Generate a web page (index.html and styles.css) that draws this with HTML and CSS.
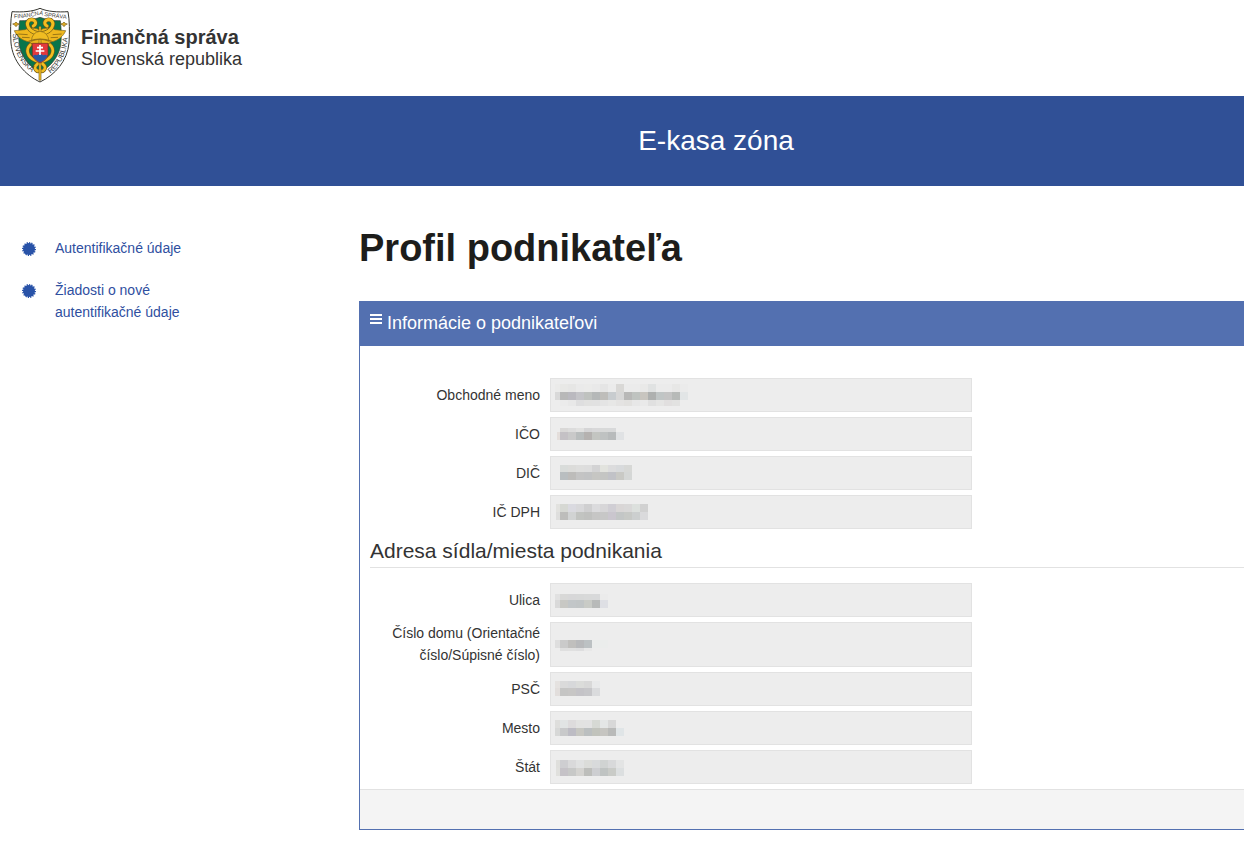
FILE: index.html
```html
<!DOCTYPE html>
<html lang="sk">
<head>
<meta charset="utf-8">
<title>E-kasa zóna</title>
<link rel="stylesheet" href="styles.css">
</head>
<body>

<header class="top">
    <a class="brand" href="#">
        <svg class="crest" viewBox="32 22 180 228" aria-hidden="true">
            <path d="M122 26C100 36 68 38 38 36C33 62 33 98 35 130C40 184 76 225 122 247C168 225 204 184 209 130C211 98 211 62 206 36C176 38 144 36 122 26Z" fill="#fff" stroke="#34342e" stroke-width="3"/>
            <path d="M122 53C102 60 79 64 61 63C58 90 57 111 60 137C66 170 87 199 122 219C157 199 178 170 184 137C187 111 186 90 183 63C165 64 142 60 122 53Z" fill="#08754b" stroke="#333d32" stroke-width="2"/>
            <path d="M122 92C110 82 87 84 77 90L45 93C51 108 69 124 91 127L98 139H147L154 127C177 123 193 109 199 93L167 90C157 84 134 82 122 92Z" fill="#eeb71e" stroke="#77611d" stroke-width="2"/>
            <path d="M57 103L85 105M68 113L91 114M187 103L160 105M176 113L154 114" stroke="#9b7615" stroke-width="3"/>
            <g fill="none" stroke-linecap="round">
                <path d="M116 101C88 96 76 72 91 61C106 56 116 72 102 79M129 101C157 96 169 72 154 61C139 56 129 72 143 79" stroke="#705817" stroke-width="13"/>
                <path d="M116 101C88 96 76 72 91 61C106 56 116 72 102 79M129 101C157 96 169 72 154 61C139 56 129 72 143 79" stroke="#f2be20" stroke-width="9"/>
                <path d="M93 135C78 149 84 171 105 181C126 189 145 198 134 211Q129 217 124 213M152 135C167 149 161 171 140 181C119 189 99 198 110 211Q116 217 121 213" stroke="#705817" stroke-width="12"/>
                <path d="M93 135C78 149 84 171 105 181C126 189 145 198 134 211Q129 217 124 213M152 135C167 149 161 171 140 181C119 189 99 198 110 211Q116 217 121 213" stroke="#f2be20" stroke-width="8"/>
                <path d="M122 83V239" stroke="#735d20" stroke-width="8"/>
                <path d="M122 83V239" stroke="#e6b322" stroke-width="5"/>
            </g>
            <path d="M96 125Q98 97 122 95Q146 97 149 125Q122 113 96 125Z" fill="#f0bc22" stroke="#846617" stroke-width="2"/>
            <path d="M88 125Q122 112 157 125" fill="none" stroke="#94701a" stroke-width="4"/>
            <path d="M99 131H146V164Q144 181 122 190Q101 181 99 164Z" fill="#e2393d" stroke="#68301e" stroke-width="2"/>
            <path d="M101 169Q106 162 113 167Q122 158 131 167Q139 162 144 169Q138 182 122 188Q107 182 101 169Z" fill="#265aa3"/>
            <path d="M122 136V166M113 144H131M109 154H135" stroke="#fff" stroke-width="5"/>
            <g fill="#dda922" stroke="#735d20" stroke-width="2">
                <path d="M50 67L54 71L60 73L54 76L50 81L46 76L40 73L46 71Z"/>
                <path d="M194 67L198 71L204 73L198 76L194 81L190 76L184 73L190 71Z"/>
            </g>
            <path id="arcTop" d="M44 56Q83 55 122 45Q161 55 204 57" fill="none"/>
            <path id="arcLeft" d="M40 102C43 155 61 195 112 228" fill="none"/>
            <path id="arcRight" d="M153 221C184 201 205 158 207 94" fill="none"/>
            <g class="crest-text">
                <text><textPath href="#arcTop">FINANČNÁ SPRÁVA</textPath></text>
                <text class="crest-side"><textPath href="#arcLeft">SLOVENSKÁ</textPath></text>
                <text class="crest-side"><textPath href="#arcRight">REPUBLIKA</textPath></text>
            </g>
        </svg>
        <span class="brand-name"><strong>Finančná správa</strong><span>Slovenská republika</span></span>
    </a>
</header>

<div class="zone">E-kasa zóna</div>

<div class="layout">
    <nav class="side">
        <a href="#"><svg class="badge" viewBox="0 0 14 14" aria-hidden="true"><circle cx="7" cy="7" r="6"/><circle class="teeth" cx="7" cy="7" r="6" pathLength="32"/></svg><span>Autentifikačné údaje</span></a>
        <a href="#"><svg class="badge" viewBox="0 0 14 14" aria-hidden="true"><circle cx="7" cy="7" r="6"/><circle class="teeth" cx="7" cy="7" r="6" pathLength="32"/></svg><span>Žiadosti o nové autentifikačné údaje</span></a>
    </nav>

    <main>
        <h1>Profil podnikateľa</h1>
        <section class="panel">
            <h2><svg class="bars" viewBox="0 0 12 11" aria-hidden="true"><path d="M0 1H12M0 5H12M0 9H12"/></svg>Informácie o podnikateľovi</h2>
            <form class="profile">
                <div class="row"><label for="name">Obchodné meno</label><div class="field"><input id="name" type="text" readonly></div></div>
                <div class="row"><label for="ico">IČO</label><div class="field"><input id="ico" type="text" readonly></div></div>
                <div class="row"><label for="dic">DIČ</label><div class="field"><input id="dic" type="text" readonly></div></div>
                <div class="row"><label for="vat">IČ DPH</label><div class="field"><input id="vat" type="text" readonly></div></div>
                <h3>Adresa sídla/miesta podnikania</h3>
                <div class="row"><label for="street">Ulica</label><div class="field"><input id="street" type="text" readonly></div></div>
                <div class="row"><label for="number">Číslo domu (Orientačné číslo/Súpisné číslo)</label><div class="field"><input id="number" type="text" readonly></div></div>
                <div class="row"><label for="zip">PSČ</label><div class="field"><input id="zip" type="text" readonly></div></div>
                <div class="row"><label for="city">Mesto</label><div class="field"><input id="city" type="text" readonly></div></div>
                <div class="row"><label for="country">Štát</label><div class="field"><input id="country" type="text" readonly></div></div>
            </form>
            <div class="panel-footer"></div>
        </section>
    </main>
</div>

<script src="script.js"></script>
</body>
</html>
```
FILE: styles.css
```css
* {
    box-sizing: border-box;
}

body {
    margin: 0;
    background: #fff;
    color: #333;
    font-family: "Liberation Sans", Arial, sans-serif;
    font-size: 14px;
    line-height: 22px;
    overflow-x: hidden;
}

a {
    color: #2f4f9f;
    text-decoration: none;
}

.top {
    height: 96px;
    padding: 7px 10px;
}

.brand {
    display: inline-flex;
    gap: 11px;
    color: #333;
}

.crest {
    width: 60px;
    height: 76px;
}

.crest-text {
    font-size: 17px;
    fill: #3b3b36;
}

.crest-side {
    font-size: 22px;
}

.brand-name {
    display: flex;
    flex-direction: column;
    padding-top: 19px;
    font-size: 18px;
    line-height: 22px;
}

.brand-name strong {
    font-size: 20px;
}

.zone {
    padding: 22px 0 22px 188px;
    background: #305096;
    color: #fff;
    font-size: 28px;
    line-height: 46px;
    text-align: center;
}

.layout {
    display: flex;
    align-items: flex-start;
}

.side {
    display: flex;
    flex-direction: column;
    gap: 20px;
    flex: 0 0 359px;
    padding: 51px 150px 0 22px;
}

.side a {
    display: flex;
    gap: 19px;
}

.badge {
    flex: none;
    width: 14px;
    height: 14px;
    margin-top: 5px;
    fill: #2953a8;
}

.teeth {
    fill: none;
    stroke: #2953a8;
    stroke-width: 2;
    stroke-dasharray: 1 1;
}

main {
    flex: 1;
    min-width: 0;
}

h1 {
    margin: 40px 0 31px;
    color: #1d1d1b;
    font-size: 38px;
    line-height: 44px;
}

.panel {
    border: 1px solid #5370b0;
    border-right: 0;
}

.panel h2 {
    display: flex;
    gap: 5px;
    margin: 0;
    padding: 9px 10px 11px;
    background: #5370b0;
    color: #fff;
    font-size: 18px;
    font-weight: normal;
    line-height: 24px;
}

.bars {
    width: 12px;
    height: 11px;
    margin-top: 3px;
    stroke: #fff;
    stroke-width: 2;
}

.profile {
    display: flex;
    flex-direction: column;
    gap: 5px;
    padding: 32px 0 5px 10px;
}

.row {
    display: grid;
    grid-template-columns: 170px minmax(0, 422px);
    gap: 10px;
    align-items: center;
}

.row label {
    padding-bottom: 1px;
    text-align: right;
}

.field {
    position: relative;
    display: flex;
    align-self: stretch;
    min-height: 34px;
}

.field input {
    width: 100%;
    padding: 5px;
    border: 1px solid #e2e2e2;
    background: #ededed;
    color: #333;
    font: inherit;
}

/* hidden personal data, drawn over the empty field */
.mosaic {
    position: absolute;
    top: 0;
    left: 0;
    width: 160px;
    height: 34px;
    pointer-events: none;
}

.profile h3 {
    margin: 0 0 10px;
    padding: 5px 0;
    border-bottom: 1px solid #e2e2e2;
    color: #333;
    font-size: 21px;
    font-weight: normal;
    line-height: 23px;
}

.panel-footer {
    height: 40px;
    border-top: 1px solid #e2e2e2;
    background: #f4f4f4;
}
```
FILE: script.js
```javascript
// each strip: x, y, height, first cell width, cell colours
const masks = {
    name: [
        [5, 6, 8, 5, 'ebebea e8e8e6 e6e6e5 eaeaea ebebea e9e9e9 e5e5e5 ebebeb d9d8d6 ebebeb ebebeb e9e9e8 e0e2e2 ebebeb ebebeb e7e7e6 ebebeb'],
        [5, 14, 8, 5, 'd9d9d9 b8b8b8 bab9bf c4c4c8 bfc2bf b5b8b8 bebdba c8cccf d7d7d7 b8b8b7 bfc3c0 c8c5bf aeb0af c0c5c5 c4c4c4 b7bab8 e2e5e6'],
        [10, 22, 6, 8, 'ebebeb e8e8e8 dededf e1e1e0 e1e1e1 e4e4e4 e7e7e6 e4e3e2 e2e1df e7e7e7 e9e9e9 e0e0e0 e5e5e4 e1dfdf e2e2e1']
    ],
    ico: [
        [10, 11, 4, 8, 'd9d8d7 dcdcdc e1e1e0 d5d5d6 d8d8d9 d8d9d9 d8d9da'],
        [7, 15, 8, 3, 'e4dedb c4c1c5 c9c9c9 b9bdbd b5b2b0 c3c5c1 bfc2c2 b8bbbc e0e2e4']
    ],
    dic: [
        [10, 9, 7, 8, 'd9dcda dcdcda dededd dddddd d3d3d4 e2e3de dcdcdd d8dadc d7d8d6'],
        [10, 16, 8, 8, 'b9bec0 bdbcba c4c4c4 c2c3c4 c6c6c3 c4c5c3 c1c2c7 c9c9c5 d5d7d6']
    ],
    vat: [
        [6, 9, 8, 4, 'e2e2df d6d8d3 dadae0 d8d8da cfcfd0 dbdbdd d7d6d8 d0ced4 d9d6d6 d9d8d8 dce0dd d1d1d1'],
        [6, 17, 8, 4, 'dededd bdbdbb d1d3d3 c2c4c1 c0c1bf c6c6c5 c7c7c7 cac6ce c3c6c6 c7c9c6 cccfcf dadadc']
    ],
    street: [
        [5, 11, 6, 5, 'e1e1e1 d8d8d7 d7d7d8 d7d8d8 d8d9d9 d8d9da ebebeb'],
        [5, 17, 8, 5, 'd9d9d9 c8c8c4 c2c6c8 c1c5c6 c9cbc6 b8bab9 dedfe4']
    ],
    number: [
        [5, 18, 8, 5, 'dedede cacaca c0bfbd b8b9bb bcc1c3 ebedec ebedec'],
        [10, 26, 3, 8, 'dfdfdf e0e0e0 dededf e8e8e8']
    ],
    zip: [
        [5, 9, 7, 5, 'e5e2e0 dadada d7d8da dbdcda d8d8d8 e8e9ea'],
        [5, 16, 8, 5, 'e2dedc c5c5c4 c7c6c5 c4c3c7 c6c6c9 dadbdd']
    ],
    city: [
        [5, 9, 8, 5, 'dededc e1e4e4 dddbdc e2e2e1 e2e2e2 d6d9d4 e4e6e6 d8d8d8'],
        [5, 17, 8, 5, 'd7d8d7 c8c9ca bdbcc4 c7c7c2 bbbfc0 c1c3bc c6c5c1 b9bab9 e0e5e7']
    ],
    country: [
        [6, 10, 8, 4, 'dfdfdc ceced1 d9d9da e0e1e1 dbdcd9 d8dadb d0d3d2 d8d9da e3e4e4'],
        [6, 18, 8, 4, 'e0e0dd c5c2c7 c7c8c7 d4d3d0 bdbebb cdced1 bfc3c2 c9cbc7 dcdfe0']
    ]
};

const svgNS = 'http://www.w3.org/2000/svg';

for (const id in masks) {
    const svg = document.createElementNS(svgNS, 'svg');
    svg.setAttribute('class', 'mosaic');
    svg.setAttribute('aria-hidden', 'true');

    masks[id].forEach(([start, y, height, first, colours]) => {
        let x = start;
        colours.split(' ').forEach((colour, i) => {
            const width = i === 0 ? first : 8;
            const rect = document.createElementNS(svgNS, 'rect');
            rect.setAttribute('x', x);
            rect.setAttribute('y', y);
            rect.setAttribute('width', width);
            rect.setAttribute('height', height);
            rect.setAttribute('fill', '#' + colour);
            svg.appendChild(rect);
            x += width;
        });
    });

    document.getElementById(id).parentNode.appendChild(svg);
}
```
